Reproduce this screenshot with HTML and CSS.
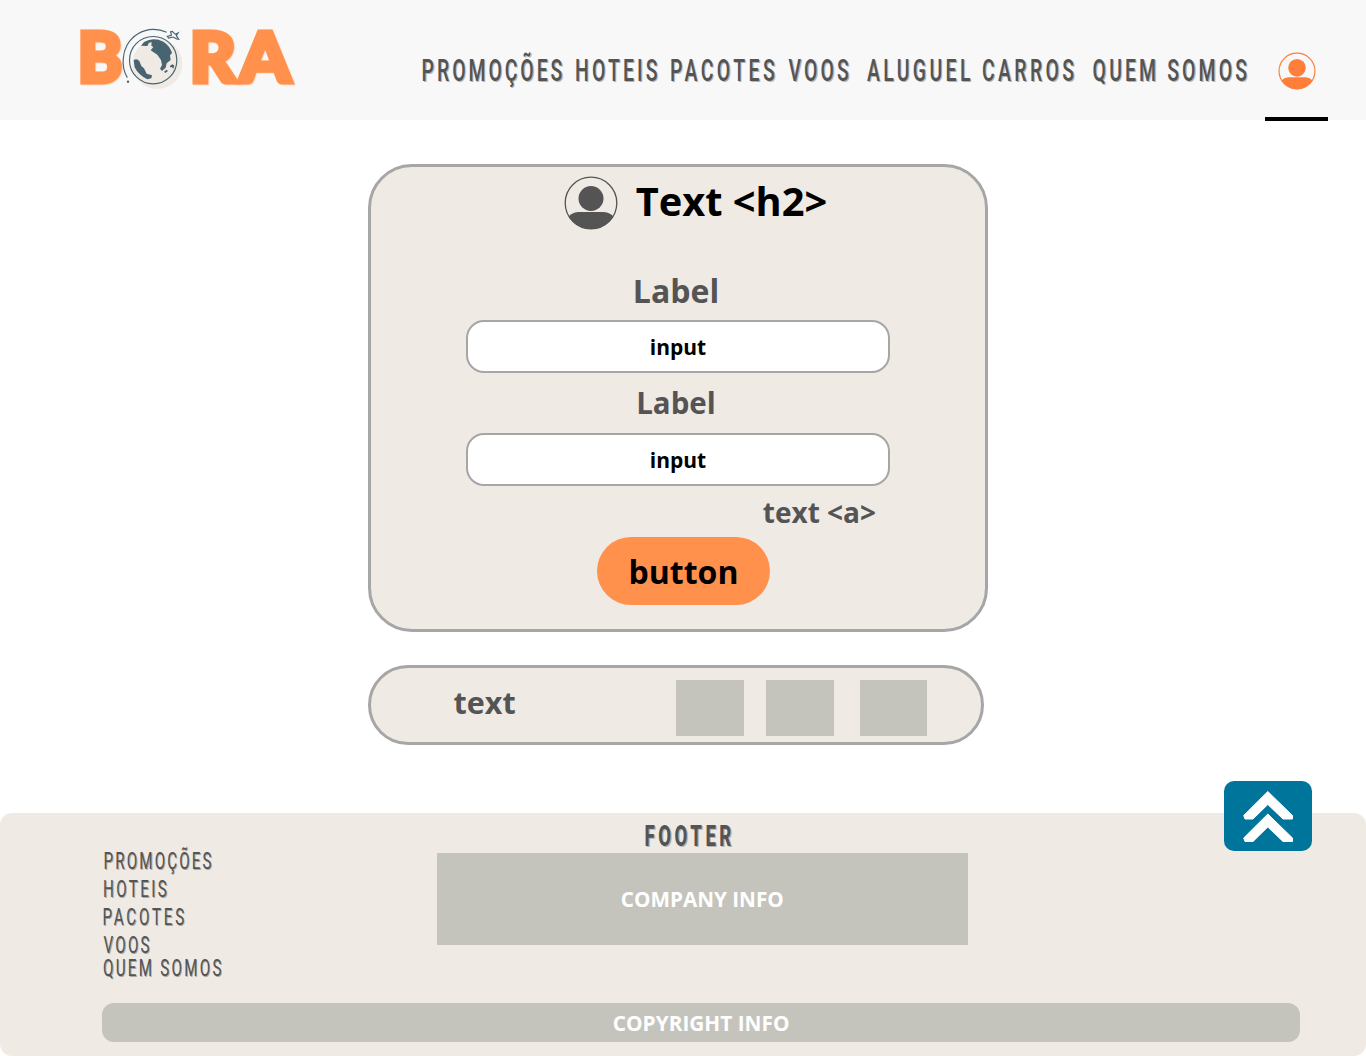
FILE: index.html
```html
<!DOCTYPE html>
<html lang="pt-BR">
<head>
<meta charset="utf-8">
<title>Bora</title>
<link rel="stylesheet" href="styles.css">
</head>
<body>
<header class="header">
  <a class="logo" href="#">
    <svg width="240" height="90" viewBox="0 0 720 270">
      <g class="logo-text">
        <text x="23" y="200" textLength="133" lengthAdjust="spacingAndGlyphs">B</text>
        <text x="359" y="200" textLength="138" lengthAdjust="spacingAndGlyphs">R</text>
        <text x="509" y="200" textLength="152" lengthAdjust="spacingAndGlyphs">A</text>
      </g>
      <circle cx="262" cy="147" r="75" fill="#efeae4"/>
      <g fill="none" stroke="#486470" stroke-width="3.5">
        <circle cx="249.500" cy="135.500" r="71"/>
        <path d="M172 188A91 91 0 0 1 160 130A91 91 0 0 1 290 52"/>
        <path d="M292 64L304 61L302 50L307 49L316 58L324 54L319 62L326 73L320 72L310 66L296 69Z"/>
      </g>
      <g fill="#486470">
        <circle cx="174" cy="200" r="3.500"/>
        <path d="M213 92L222 81Q250 65 280 80Q299 92 306 114L300 121L302 135L290 145L287 158L276 168L270 161L276 150L273 135L262 119L242 106L250 96L244 92L245 82L237 83L232 93Z"/>
        <path d="M191 136Q200 129 208 138L214 153L222 160L230 176L246 181L244 190L232 193Q205 180 194 157Z"/>
        <path d="M282 170L290 164L294 168L286 174ZM300 152L308 148L313 152L310 161L305 156L300 157Z"/>
      </g>
    </svg>
  </a>
  <nav class="nav">
    <a href="#"><svg class="caps" width="154" height="44"><text transform="scale(.62 1)" x="1" y="32" textLength="227">PROMOÇÕES</text></svg></a>
    <a href="#"><svg class="caps" width="95" height="44"><text transform="scale(.62 1)" x="0" y="32" textLength="133">HOTEIS</text></svg></a>
    <a href="#"><svg class="caps" width="118" height="44"><text transform="scale(.62 1)" x="0" y="32" textLength="169">PACOTES</text></svg></a>
    <a href="#"><svg class="caps" width="79" height="44"><text transform="scale(.62 1)" x="1" y="32" textLength="97">VOOS</text></svg></a>
    <a href="#"><svg class="caps" width="225" height="44"><text transform="scale(.62 1)" x="0" y="32" textLength="334">ALUGUEL CARROS</text></svg></a>
    <a href="#"><svg class="caps" width="172" height="44"><text transform="scale(.62 1)" x="1" y="32" textLength="249">QUEM SOMOS</text></svg></a>
  </nav>
  <a class="account" href="#">
    <svg width="38" height="38" viewBox="0 0 54 54">
      <clipPath id="face"><circle cx="27" cy="27" r="26"/></clipPath>
      <circle cx="27" cy="27" r="25.500" fill="none" stroke="currentColor" stroke-width="1.700"/>
      <circle cx="27" cy="22.500" r="12.500" fill="currentColor"/>
      <rect x="1" y="36" width="52" height="40" rx="14" fill="currentColor" clip-path="url(#face)"/>
    </svg>
  </a>
</header>

<main class="main">
  <form class="card">
    <div class="title">
      <svg width="54" height="54" viewBox="0 0 54 54">
        <circle cx="27" cy="27" r="25.800" fill="none" stroke="currentColor" stroke-width="1.300"/>
        <circle cx="27" cy="22.500" r="12.500" fill="currentColor"/>
        <rect x="1" y="36" width="52" height="40" rx="14" fill="currentColor" clip-path="url(#face)"/>
      </svg>
      <h2>Text &lt;h2&gt;</h2>
    </div>
    <div class="label label-first">Label</div>
    <div class="field">input</div>
    <div class="label label-second">Label</div>
    <div class="field">input</div>
    <a class="link" href="#">text &lt;a&gt;</a>
    <button class="submit" type="button">button</button>
  </form>
  <section class="social">
    <span class="social-text">text</span>
    <i class="tile"></i><i class="tile"></i><i class="tile"></i>
  </section>
</main>

<footer class="footer">
  <a class="to-top" href="#">
    <svg width="88" height="70" viewBox="0 0 88 70">
      <g fill="#fff" stroke="#fff" stroke-width="1" stroke-linejoin="round">
        <path d="M43.800 10.500L68.500 34.500V38H59L43.800 23.500L29 38H21L19.700 34.500Z"/>
        <path d="M43.800 33L68.500 57V60.500H59L43.800 46L29 60.500H21L19.700 57Z"/>
      </g>
    </svg>
  </a>
  <div class="footer-top">
    <nav class="footer-nav">
      <a href="#"><svg class="caps small" width="124" height="28"><text transform="scale(.62 1)" x="1" y="22.500" textLength="174">PROMOÇÕES</text></svg></a>
      <a href="#"><svg class="caps small" width="124" height="28"><text transform="scale(.62 1)" x="0" y="22.500" textLength="103">HOTEIS</text></svg></a>
      <a href="#"><svg class="caps small" width="124" height="28"><text transform="scale(.62 1)" x="-1" y="22.500" textLength="132">PACOTES</text></svg></a>
      <a href="#"><svg class="caps small" width="124" height="23"><text transform="scale(.62 1)" x="1" y="22.500" textLength="74">VOOS</text></svg></a>
      <a href="#"><svg class="caps small" width="124" height="28"><text transform="scale(.62 1)" x="0" y="22.500" textLength="191">QUEM SOMOS</text></svg></a>
    </nav>
    <div class="company">
      <svg class="caps heading" width="100" height="39"><text transform="scale(.62 1)" x="9" y="33" textLength="140">FOOTER</text></svg>
      <div class="company-info">COMPANY INFO</div>
    </div>
  </div>
  <div class="copyright">COPYRIGHT INFO</div>
</footer>
</body>
</html>
```
FILE: styles.css
```css
* { box-sizing: border-box; }
body {
  margin: 0;
  width: 1366px;
  height: 1056px;
  overflow: hidden;
  display: flex;
  flex-direction: column;
  background: #fff;
  color: #545454;
  font-family: "Open Sans", "Noto Sans", sans-serif;
  font-weight: 700;
}
a { color: inherit; text-decoration: none; }
svg { display: block; }

.header {
  height: 120px;
  flex: none;
  display: flex;
  align-items: flex-start;
  padding-left: 70px;
  background: #f8f8f8;
}
.logo { margin-top: 15px; width: 240px; }
.logo svg { overflow: visible; }
.logo-text {
  font-family: Lato, sans-serif;
  font-weight: 900;
  font-size: 206px;
  fill: #ff914d;
  stroke: #ff914d;
  stroke-width: 15px;
  filter: drop-shadow(2px 2px 0 #ffd0b0);
}
.nav { display: flex; margin: 49px 0 0 110.500px; }
.caps {
  overflow: visible;
  font-family: Roboto, sans-serif;
  font-size: 31.300px;
  font-weight: 500;
  fill: #545454;
  text-shadow: 1.500px 1.200px 0 #b4b4b4;
}
.account {
  width: 63px;
  height: 121px;
  margin-left: 1.500px;
  padding: 52px 0 0 12.500px;
  border-bottom: 4px solid #000;
  color: #ff7f3a;
}

.main { width: 620px; margin: 44px 0 0 368px; flex: none; }
.card {
  height: 468px;
  display: flex;
  flex-direction: column;
  align-items: center;
  padding-top: 9px;
  border: 3px solid #a6a6a6;
  border-radius: 44px;
  background: #efeae4;
}
.title { display: flex; gap: 17.500px; height: 54px; margin-left: 35.500px; }
.title h2 {
  margin: 0;
  font-size: 39.800px;
  line-height: 50px;
  color: #000;
}
.label { height: 40px; line-height: 40px; }
.label-first { margin: 41px 4px 9px 0; font-size: 32px; }
.label-second { margin: 10px 4px 10px 0; font-size: 29.500px; }
.field {
  width: 424px;
  height: 53px;
  flex: none;
  border: 2px solid #a6a6a6;
  border-radius: 18px;
  background: #fff;
  color: #000;
  font-size: 21px;
  line-height: 50px;
  text-align: center;
}
.link {
  align-self: flex-end;
  height: 40px;
  margin: 6px 109px 5px 0;
  font-size: 28px;
  line-height: 40px;
}
.submit {
  width: 173px;
  height: 68px;
  margin-left: 11px;
  padding: 0;
  border: 0;
  border-radius: 34px;
  background: #ff914d;
  color: #000;
  font: 700 32px/70px "Open Sans", "Noto Sans", sans-serif;
}
.social {
  width: 616px;
  height: 80px;
  margin-top: 33px;
  display: flex;
  padding: 12px 54px 0 82.500px;
  border: 3px solid #a6a6a6;
  border-radius: 40px;
  background: #efeae4;
}
.social-text { margin-right: auto; font-size: 30.500px; line-height: 45px; }
.tile { width: 67.500px; height: 56px; margin-left: 22.500px; background: #c5c4bc; }
.tile:last-child { margin-left: 26px; }

.footer {
  position: relative;
  height: 243px;
  margin-top: 68px;
  flex: none;
  border-radius: 12px;
  background: #efeae4;
}
.footer-top { display: flex; height: 190px; }
.footer-nav { width: 334px; margin: 32.500px 0 0 103px; }
.small { font-size: 24.500px; font-weight: 400; text-shadow: 1.200px 1px 0 #aaa7a2; }
.company { width: 530.500px; }
.heading { margin-left: 202px; font-weight: 800; font-size: 30px; }
.company-info {
  height: 92px;
  margin-top: .5px;
  background: #c5c4bc;
  color: #fff;
  font-size: 20.700px;
  line-height: 93px;
  text-align: center;
}
.copyright {
  width: 1197.500px;
  height: 39px;
  margin-left: 102.400px;
  border-radius: 12px;
  background: #c5c4bc;
  color: #fff;
  font-size: 20.800px;
  line-height: 40px;
  text-align: center;
}
.to-top {
  position: absolute;
  left: 1224px;
  top: -32px;
  border-radius: 10px;
  background: #00759c;
}
```
